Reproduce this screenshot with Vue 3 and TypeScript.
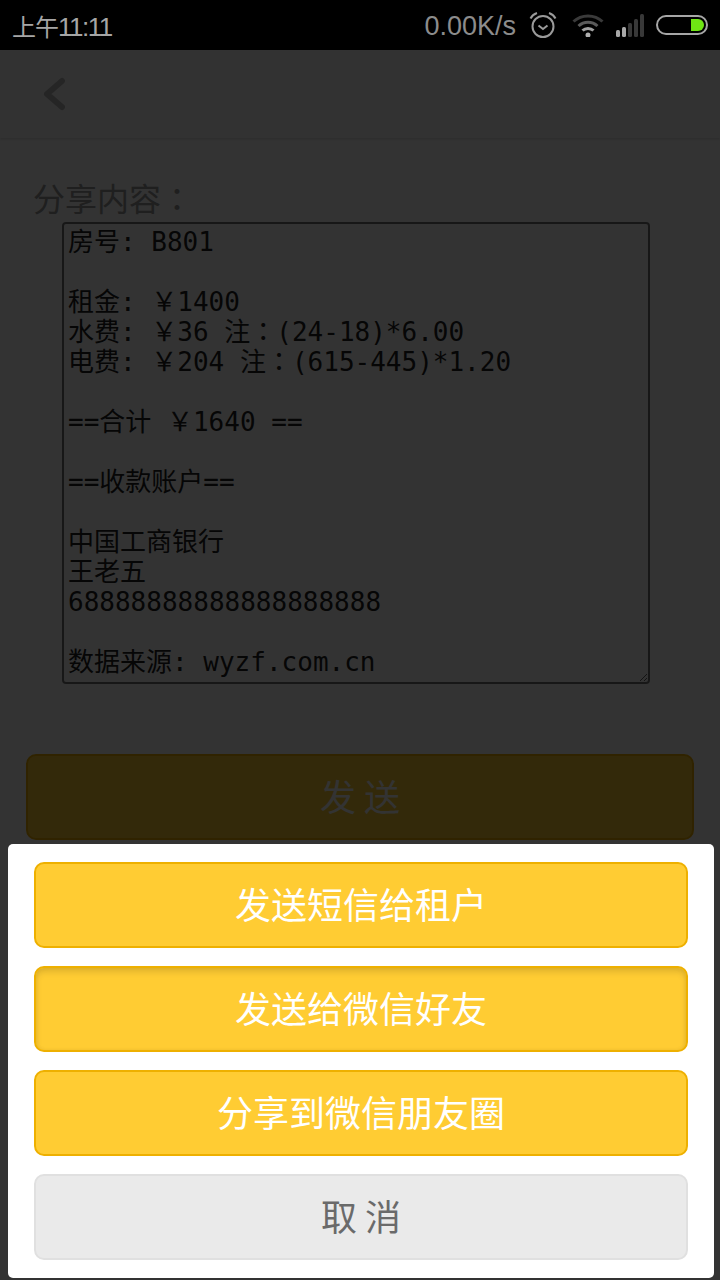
<template>
  <div class="phone">
    <div class="status-bar">
      <span class="time"><span class="ampm">上午</span>11:11</span>
      <div class="status-right">
        <span class="speed">0.00K/s</span>
        <svg class="ic-alarm" width="28" height="28" viewBox="0 0 28 28" fill="none" stroke="#9a9a9a">
          <circle cx="14" cy="15.5" r="10.5" stroke-width="2" />
          <path d="M9.5 14.5 14 18l4.500-3.500" stroke-width="2" />
          <path d="M1.500 7.500C3 4.500 5 3 8 2M26.500 7.500C25 4.500 23 3 20 2" stroke-width="2" />
        </svg>
        <svg class="ic-wifi" width="32" height="24" viewBox="0 0 32 24" fill="none">
          <path d="M1.500 8.500C9.500 1 22.500 1 30.500 8.500" stroke="#3a3a3a" stroke-width="3" />
          <path d="M6.500 13C12 8 20 8 25.500 13" stroke="#5a5a5a" stroke-width="3" />
          <path d="M10.500 17.500C13.500 14.700 18.500 14.700 21.500 17.500" stroke="#a0a0a0" stroke-width="3" />
          <circle cx="16" cy="22" r="2.500" fill="#b0b0b0" />
        </svg>
        <svg class="ic-signal" width="28" height="24" viewBox="0 0 28 24">
          <rect x="0" y="16" width="4" height="7" rx="1.500" fill="#a8a8a8" />
          <rect x="6" y="13" width="4" height="10" rx="1.500" fill="#a8a8a8" />
          <rect x="12" y="9" width="4" height="14" rx="1.500" fill="#383838" />
          <rect x="18" y="5" width="4" height="18" rx="1.500" fill="#383838" />
          <rect x="24" y="0" width="4" height="23" rx="1.500" fill="#383838" />
        </svg>
        <div class="battery"><div class="battery-fill"></div></div>
      </div>
    </div>

    <div class="header">
      <svg width="28" height="38" viewBox="0 0 28 38" fill="none">
        <path d="M24 6 9 19l15 13" stroke="#bbb" stroke-width="6" stroke-linecap="round" stroke-linejoin="round" />
      </svg>
    </div>

    <div class="content">
      <div class="label">分享内容<span class="fw">：</span></div>
      <div class="share-text"><template v-for="(part, i) in shareParts" :key="i"><span v-if="i > 0" class="fw">：</span>{{ part }}</template></div>
      <div class="send-btn">发 送</div>
    </div>

    <div class="mask">
      <div class="sheet">
        <div v-for="a in actions" :key="a.text" class="sheet-btn" :class="{ pressed: a.pressed }">{{ a.text }}</div>
        <div class="sheet-btn cancel">取 消</div>
      </div>
    </div>
  </div>
</template>

<script setup lang="ts">
const shareText = [
  '房号: B801',
  '',
  '租金: ￥1400',
  '水费: ￥36 注：(24-18)*6.00',
  '电费: ￥204 注：(615-445)*1.20',
  '',
  '==合计 ￥1640 ==',
  '',
  '==收款账户==',
  '',
  '中国工商银行',
  '王老五',
  '68888888888888888888',
  '',
  '数据来源: wyzf.com.cn',
].join('\n')

// 全角冒号要居中显示，单独换字体
const shareParts = shareText.split('：')

const actions = [
  { text: '发送短信给租户', pressed: false },
  { text: '发送给微信好友', pressed: true },
  { text: '分享到微信朋友圈', pressed: false },
]
</script>

<style>
html,
body {
  margin: 0;
  background: #fff;
}
</style>

<style scoped>
.phone {
  position: relative;
  width: 720px;
  height: 1280px;
  overflow: hidden;
  background: #fff;
  font-family: "Liberation Sans", "Noto Sans CJK SC", sans-serif;
}
.status-bar {
  height: 50px;
  background: #000;
  color: #a6a6a6;
  display: flex;
  align-items: center;
  justify-content: space-between;
  padding: 0 12px;
  box-sizing: border-box;
}
.time {
  font-size: 26px;
  letter-spacing: -1.5px;
}
.ampm {
  font-size: 24px;
  letter-spacing: -1px;
}
.status-right {
  display: flex;
  align-items: center;
}
.speed {
  font-size: 27px;
  color: #8c8c8c;
  margin-right: 13px;
  padding-top: 2px;
}
.ic-alarm {
  margin-right: 15px;
}
.ic-wifi {
  margin-right: 12px;
}
.ic-signal {
  margin-right: 12px;
  margin-top: 2px;
}
.battery {
  width: 52px;
  height: 20px;
  box-sizing: border-box;
  border: 2px solid #a6a6a6;
  border-radius: 10px;
  padding: 2px 2px;
  display: flex;
  justify-content: flex-end;
}
.battery-fill {
  width: 13px;
  height: 12px;
  background: #6fe514;
  border-radius: 0 6px 6px 0;
}
.header {
  height: 88px;
  background: #fafafa;
  box-shadow: 0 1px 3px rgba(0, 0, 0, 0.18);
  display: flex;
  align-items: center;
  padding-left: 38px;
  box-sizing: border-box;
  position: relative;
}
.content {
  display: flex;
  flex-direction: column;
  padding: 42px 26px 0;
}
.label {
  height: 38px;
  font-size: 32px;
  line-height: 38px;
  color: #999;
  padding: 1px 0 0 7px;
}
.fw {
  font-family: "Noto Sans CJK TC", sans-serif;
  line-height: 0;
}
.share-text {
  width: 588px;
  height: 462px;
  margin: 3px 0 0 36px;
  box-sizing: border-box;
  padding: 3px 4px;
  border: 2px solid #767676;
  border-radius: 4px;
  background: #fff;
  color: #222;
  font-family: "DejaVu Sans Mono", "Noto Sans CJK SC", monospace;
  font-size: 26px;
  line-height: 30px;
  overflow: hidden;
  resize: both;
  white-space: pre;
}
.send-btn {
  margin-top: 70px;
  height: 86px;
  box-sizing: border-box;
  padding-bottom: 5px;
  border: 2px solid #eeb000;
  border-radius: 10px;
  background: #ffcc33;
  color: #fff;
  font-size: 36px;
  word-spacing: -2px;
  display: flex;
  align-items: center;
  justify-content: center;
}
.mask {
  position: absolute;
  left: 0;
  right: 0;
  top: 50px;
  bottom: 0;
  background: rgba(0, 0, 0, 0.8);
}
.sheet {
  position: absolute;
  left: 8px;
  right: 6px;
  bottom: 2px;
  height: 434px;
  box-sizing: border-box;
  padding: 18px 26px;
  background: #fff;
  border-radius: 5px;
  display: flex;
  flex-direction: column;
  gap: 18px;
}
.sheet-btn {
  height: 86px;
  box-sizing: border-box;
  padding-bottom: 5px;
  border: 2px solid #eeb000;
  border-radius: 10px;
  background: #ffcc33;
  color: #fff;
  font-size: 36px;
  word-spacing: -2px;
  display: flex;
  align-items: center;
  justify-content: center;
}
.sheet-btn.pressed {
  box-shadow: inset 0 4px 6px rgba(0, 0, 0, 0.12), inset 0 0 4px rgba(0, 0, 0, 0.06);
}
.sheet-btn.cancel {
  background: #eaeaea;
  border-color: #e0e0e0;
  color: #6a6a6a;
}
</style>
